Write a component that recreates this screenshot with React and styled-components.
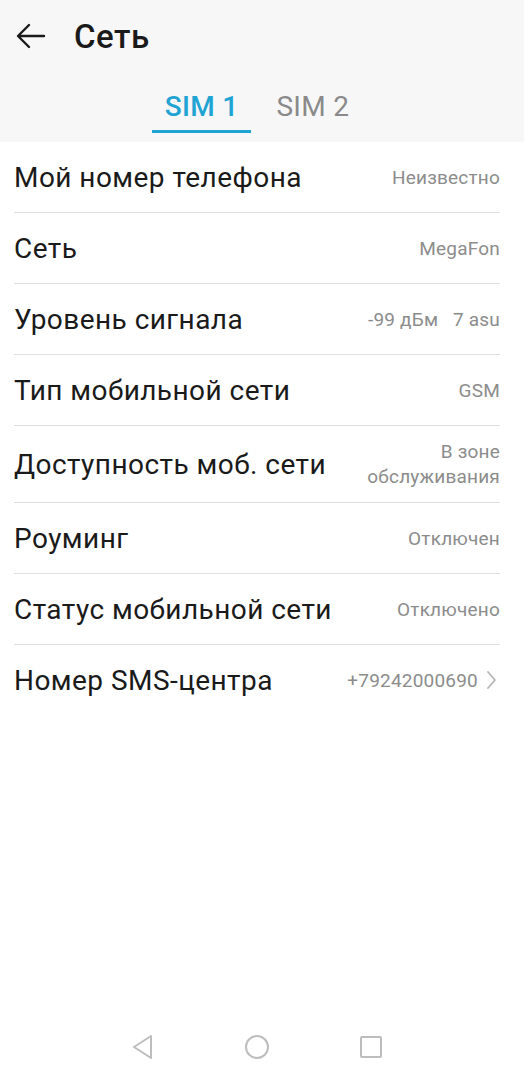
import React from "react";
import styled, { createGlobalStyle } from "styled-components";

const Global = createGlobalStyle`
  html, body { margin: 0; padding: 0; background: #ffffff; }
  body { font-family: Roboto, "Noto Sans", sans-serif; -webkit-font-smoothing: antialiased; }
`;

const Screen = styled.div`
  width: 524px;
  height: 1080px;
  display: flex;
  flex-direction: column;
  background: #ffffff;
`;

const Header = styled.header`
  background: #f7f7f7;
  height: 142px;
  display: flex;
  flex-direction: column;
`;

const TopBar = styled.div`
  height: 72px;
  display: flex;
  align-items: center;
  padding-left: 16px;
`;

const BackButton = styled.div`
  width: 30px;
  height: 30px;
  display: flex;
  align-items: center;
  justify-content: center;
  margin-right: 28px;
`;

const Title = styled.h1`
  margin: 0;
  font-size: 33px;
  font-weight: 500;
  color: #1a1a1a;
  letter-spacing: 0.5px;
`;

const Tabs = styled.div`
  display: flex;
  justify-content: center;
  gap: 12px;
  padding-right: 10px;
  margin-top: 13px;
`;

const Tab = styled.div`
  position: relative;
  padding: 0 13px;
  height: 56px;
  font-size: 28px;
  line-height: 44px;
  font-weight: ${p => (p.$active ? 500 : 400)};
  color: ${p => (p.$active ? "#1fa4d3" : "#8a8a8a")};
  letter-spacing: 0.3px;
  &::after {
    content: "";
    display: ${p => (p.$active ? "block" : "none")};
    position: absolute;
    left: 0;
    right: 0;
    top: 45px;
    height: 3px;
    background: #1fa4d3;
  }
`;

const List = styled.div`
  display: flex;
  flex-direction: column;
  padding: 0 24px 0 14px;
`;

const Row = styled.div`
  display: flex;
  align-items: center;
  justify-content: space-between;
  min-height: ${p => (p.$tall ? 76 : 70)}px;
  border-bottom: ${p => (p.$last ? "none" : "1px solid #dedede")};
`;

const Label = styled.div`
  font-size: 28px;
  color: #1a1a1a;
  letter-spacing: 0.45px;
`;

const Value = styled.div`
  display: flex;
  align-items: center;
  gap: 8px;
  font-size: 19px;
  line-height: 25px;
  color: #8c8c8c;
  text-align: right;
  white-space: pre;
  letter-spacing: 0.2px;
`;

const Chevron = styled.svg`
  margin-right: 3px;
`;

const Spacer = styled.div`
  flex: 1;
`;

const NavBar = styled.nav`
  height: 66px;
  display: flex;
  align-items: center;
  justify-content: center;
  gap: 80px;
  padding-right: 10px;
`;

const NavIcon = styled.div`
  width: 34px;
  height: 34px;
  display: flex;
  align-items: center;
  justify-content: center;
`;

const rows = [
  { label: "Мой номер телефона", value: "Неизвестно" },
  { label: "Сеть", value: "MegaFon" },
  { label: "Уровень сигнала", value: "-99 дБм   7 asu" },
  { label: "Тип мобильной сети", value: "GSM" },
  { label: "Доступность моб. сети", value: "В зоне\nобслуживания", tall: true },
  { label: "Роуминг", value: "Отключен" },
  { label: "Статус мобильной сети", value: "Отключено" },
  { label: "Номер SMS-центра", value: "+79242000690", chevron: true, last: true },
];

export default function App() {
  return (
    <Screen>
      <Global />
      <Header>
        <TopBar>
          <BackButton>
            <svg width="30" height="26" viewBox="0 0 30 26" fill="none" stroke="#1a1a1a" strokeWidth="2.4" strokeLinecap="round" strokeLinejoin="round">
              <path d="M28 13H3M13 2L2 13l11 11" />
            </svg>
          </BackButton>
          <Title>Сеть</Title>
        </TopBar>
        <Tabs>
          <Tab $active>SIM 1</Tab>
          <Tab>SIM 2</Tab>
        </Tabs>
      </Header>
      <List>
        {rows.map(r => (
          <Row key={r.label} $tall={r.tall} $last={r.last}>
            <Label>{r.label}</Label>
            <Value>
              <span>{r.value}</span>
              {r.chevron && (
                <Chevron width="11" height="20" viewBox="0 0 11 20" fill="none" stroke="#b5b5b5" strokeWidth="1.8" strokeLinecap="round" strokeLinejoin="round">
                  <path d="M2 2l7 8-7 8" />
                </Chevron>
              )}
            </Value>
          </Row>
        ))}
      </List>
      <Spacer />
      <NavBar>
        <NavIcon>
          <svg width="24" height="26" viewBox="0 0 24 26" fill="none" stroke="#bdbdbd" strokeWidth="2" strokeLinejoin="round">
            <path d="M20 2L3 13l17 11z" />
          </svg>
        </NavIcon>
        <NavIcon>
          <svg width="26" height="26" viewBox="0 0 26 26" fill="none" stroke="#bdbdbd" strokeWidth="2">
            <circle cx="13" cy="13" r="11" />
          </svg>
        </NavIcon>
        <NavIcon>
          <svg width="24" height="24" viewBox="0 0 24 24" fill="none" stroke="#bdbdbd" strokeWidth="2">
            <rect x="2" y="2" width="20" height="20" rx="1" />
          </svg>
        </NavIcon>
      </NavBar>
    </Screen>
  );
}
